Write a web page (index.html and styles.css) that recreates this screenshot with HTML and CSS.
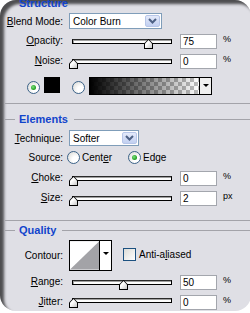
FILE: index.html
```html
<!DOCTYPE html>
<html lang="en">
<head>
    <meta charset="UTF-8">
    <title>Layer Style - Glow</title>
    <link rel="stylesheet" href="styles.css">
</head>
<body>
    <div class="panel">
        <!-- Structure -->
        <div class="legend legend-top"><span>Structure</span></div>
        <div class="row row-select">
            <label class="lbl"><u>B</u>lend Mode:</label>
            <div class="select select-blend"><span>Color Burn</span><i class="drop"><svg width="9" height="6" viewBox="0 0 9 6"><path d="M1 1 L4.5 4.5 L8 1" fill="none" stroke="#4d6185" stroke-width="2"/></svg></i></div>
        </div>
        <div class="row">
            <label class="lbl"><u>O</u>pacity:</label>
            <div class="slider"><div class="track"></div><div class="thumb" style="left:75px"></div></div>
            <div class="field">75</div><span class="unit">%</span>
        </div>
        <div class="row">
            <label class="lbl"><u>N</u>oise:</label>
            <div class="slider"><div class="track"></div><div class="thumb" style="left:0px"></div></div>
            <div class="field">0</div><span class="unit">%</span>
        </div>
        <div class="row row-fill">
            <span class="radio checked"></span>
            <span class="swatch"></span>
            <span class="radio"></span>
            <div class="gradient">
                <div class="grad-bar"></div>
                <i class="grad-drop"></i>
            </div>
        </div>
        <div class="sep"></div>

        <!-- Elements -->
        <div class="legend"><span>Elements</span></div>
        <div class="row row-select">
            <label class="lbl"><u>T</u>echnique:</label>
            <div class="select select-tech"><span>Softer</span><i class="drop"><svg width="9" height="6" viewBox="0 0 9 6"><path d="M1 1 L4.5 4.5 L8 1" fill="none" stroke="#4d6185" stroke-width="2"/></svg></i></div>
        </div>
        <div class="row row-source">
            <label class="lbl">Source:</label>
            <span class="radio"></span><span class="opt">Cent<u>e</u>r</span>
            <span class="radio checked"></span><span class="opt">Edge</span>
        </div>
        <div class="row">
            <label class="lbl"><u>C</u>hoke:</label>
            <div class="slider"><div class="track"></div><div class="thumb" style="left:0px"></div></div>
            <div class="field">0</div><span class="unit">%</span>
        </div>
        <div class="row">
            <label class="lbl"><u>S</u>ize:</label>
            <div class="slider"><div class="track"></div><div class="thumb" style="left:0px"></div></div>
            <div class="field">2</div><span class="unit">px</span>
        </div>
        <div class="sep sep-low"></div>

        <!-- Quality -->
        <div class="legend legend-quality"><span>Quality</span></div>
        <div class="row row-contour">
            <label class="lbl">Contour:</label>
            <div class="contour">
                <svg class="curve" width="30" height="29" viewBox="0 0 30 29"><rect width="30" height="29" fill="#fff"/><polygon points="0,29 30,0 30,29" fill="#a3a3a7"/></svg>
                <i class="grad-drop"></i>
            </div>
            <span class="check"></span><span class="opt">Anti-a<u>l</u>iased</span>
        </div>
        <div class="row">
            <label class="lbl"><u>R</u>ange:</label>
            <div class="slider"><div class="track"></div><div class="thumb" style="left:50px"></div></div>
            <div class="field">50</div><span class="unit">%</span>
        </div>
        <div class="row row-last">
            <label class="lbl"><u>J</u>itter:</label>
            <div class="slider"><div class="track"></div><div class="thumb" style="left:0px"></div></div>
            <div class="field">0</div><span class="unit">%</span>
        </div>
    </div>
</body>
</html>
```

FILE: styles.css
```css
body {
    margin: 0;
    background: #fff;
    font-family: Tahoma, "Liberation Sans", Arial, sans-serif;
    font-size: 10px;
    color: #000;
}
.panel {
    width: 251px;
    height: 311px;
    background: #dfdfe5;
    border-radius: 16px;
    box-shadow: inset 4px 4px 3px rgba(0, 0, 0, 0.65);
    overflow: hidden;
}
u {
    text-decoration: underline;
}

/* group titles */
.legend {
    display: flex;
    align-items: center;
    height: 15px;
    margin-top: 8px;
}
.legend::before {
    content: "";
    width: 10px;
    margin-left: 5px;
    border-top: 1px solid #a3a3a9;
}
.legend::after {
    content: "";
    flex: 1;
    border-top: 1px solid #a3a3a9;
}
.legend span {
    color: #1144cc;
    font-weight: bold;
    font-size: 11px;
    line-height: 15px;
    padding: 0 6px 0 4px;
}
.legend-top {
    margin-top: -4px;
    height: 14px;
}
.legend-top::before,
.legend-top::after {
    border-top-color: transparent;
}
.legend-quality {
    margin-top: 2px;
}
.sep {
    margin-top: 6px;
    margin-left: 5px;
    border-top: 1px solid #a3a3a9;
}
.sep-low {
    margin-top: 12px;
}

/* rows */
.row {
    display: flex;
    align-items: flex-start;
    height: 20px;
}
.lbl {
    flex: none;
    width: 63px;
    text-align: right;
    line-height: 20px;
}
.row-select {
    height: 21px;
}
.row-select .lbl {
    margin-top: 4px;
    line-height: 16px;
}
.row-fill {
    height: 26px;
}
.row-contour {
    height: 34px;
}
.row-contour .lbl {
    margin-top: 2px;
    line-height: 31px;
}
.row-last .slider {
    margin-top: 6px;
}

/* select boxes */
.select {
    display: flex;
    align-items: center;
    justify-content: space-between;
    box-sizing: border-box;
    height: 16px;
    margin: 3px 0 0 6px;
    padding: 0 1px 0 3px;
    background: #fff;
    border: 1px solid #7f9db9;
}
.select-blend {
    width: 93px;
}
.select-tech {
    width: 70px;
}
.drop {
    display: flex;
    align-items: center;
    justify-content: center;
    width: 15px;
    height: 12px;
    background: linear-gradient(#e4eafa, #c2d0f1);
    border: 1px solid #b7c6e8;
    border-radius: 2px;
    box-sizing: border-box;
}

/* sliders */
.slider {
    position: relative;
    flex: none;
    width: 105px;
    height: 10px;
    margin: 8px 0 0 6px;
}
.track {
    box-sizing: border-box;
    height: 5px;
    margin-left: 3px;
    width: 100px;
    background: #fdfdfd;
    border: 1px solid #000;
    border-top-color: #2a2a2a;
    box-shadow: inset 1px 1px 0 #a0a0a0;
}
.thumb {
    position: absolute;
    top: 0;
    width: 9px;
    height: 10px;
    background: #000;
    clip-path: polygon(50% 0, 100% 45%, 100% 100%, 0 100%, 0 45%);
}
.thumb::after {
    content: "";
    position: absolute;
    inset: 1px;
    background: linear-gradient(135deg, #fff 40%, #c8c8c8);
    clip-path: polygon(50% 0, 100% 45%, 100% 100%, 0 100%, 0 45%);
}
.field {
    flex: none;
    box-sizing: border-box;
    width: 37px;
    height: 15px;
    margin: 3px 0 0 6px;
    padding-left: 2px;
    background: #fff;
    border: 1px solid #a3a6ad;
    line-height: 13px;
}
.unit {
    margin: 2px 0 0 6px;
    line-height: 12px;
    font-size: 9px;
}

/* radios, checkbox */
.radio {
    flex: none;
    box-sizing: border-box;
    width: 13px;
    height: 13px;
    margin-top: 3px;
    border: 1px solid #3b6288;
    border-radius: 50%;
    background: radial-gradient(circle at 70% 70%, #fff 30%, #d4d4d0);
    position: relative;
}
.radio.checked::after {
    content: "";
    position: absolute;
    left: 3px;
    top: 3px;
    width: 5px;
    height: 5px;
    border-radius: 50%;
    background: radial-gradient(circle at 40% 40%, #7de07d, #1d9b1d 70%);
}
.row-fill .radio {
    margin-top: 10px;
}
.row-fill .radio:first-child {
    margin-left: 27px;
}
.swatch {
    flex: none;
    width: 16px;
    height: 16px;
    margin: 6px 12px 0 4px;
    background: #000;
}
.gradient {
    display: flex;
    box-sizing: border-box;
    width: 123px;
    height: 18px;
    margin: 6px 0 0 4px;
    border: 1px solid #000;
}
.grad-bar {
    flex: 1;
    background:
        linear-gradient(90deg, #000, rgba(0, 0, 0, 0)),
        repeating-conic-gradient(#bdbdbd 0 25%, #fff 0 50%) 0 0 / 8px 8px;
}
.grad-drop {
    display: block;
    flex: none;
    width: 11px;
    border-left: 1px solid #000;
    background: #efefef;
    position: relative;
}
.grad-drop::after {
    content: "";
    position: absolute;
    left: 3px;
    top: 6px;
    border: 3px solid transparent;
    border-top: 3px solid #000;
    border-bottom: 0;
}
.row-source .radio {
    margin-left: 4px;
}
.row-source .radio.checked {
    margin-left: 16px;
}
.opt {
    margin-left: 2px;
    line-height: 20px;
}
.contour {
    display: flex;
    box-sizing: border-box;
    width: 43px;
    height: 31px;
    margin: 2px 0 0 6px;
    border: 1px solid #000;
}
.contour .curve {
    display: block;
}
.contour .grad-drop {
    background: #fff;
}
.contour .grad-drop::after {
    top: 11px;
}
.check {
    flex: none;
    box-sizing: border-box;
    width: 13px;
    height: 13px;
    margin: 10px 0 0 11px;
    border: 1px solid #1c5180;
    background: linear-gradient(135deg, #dcdcd7, #fff);
}
.row-contour .opt {
    margin: 7px 0 0 3px;
}
```
